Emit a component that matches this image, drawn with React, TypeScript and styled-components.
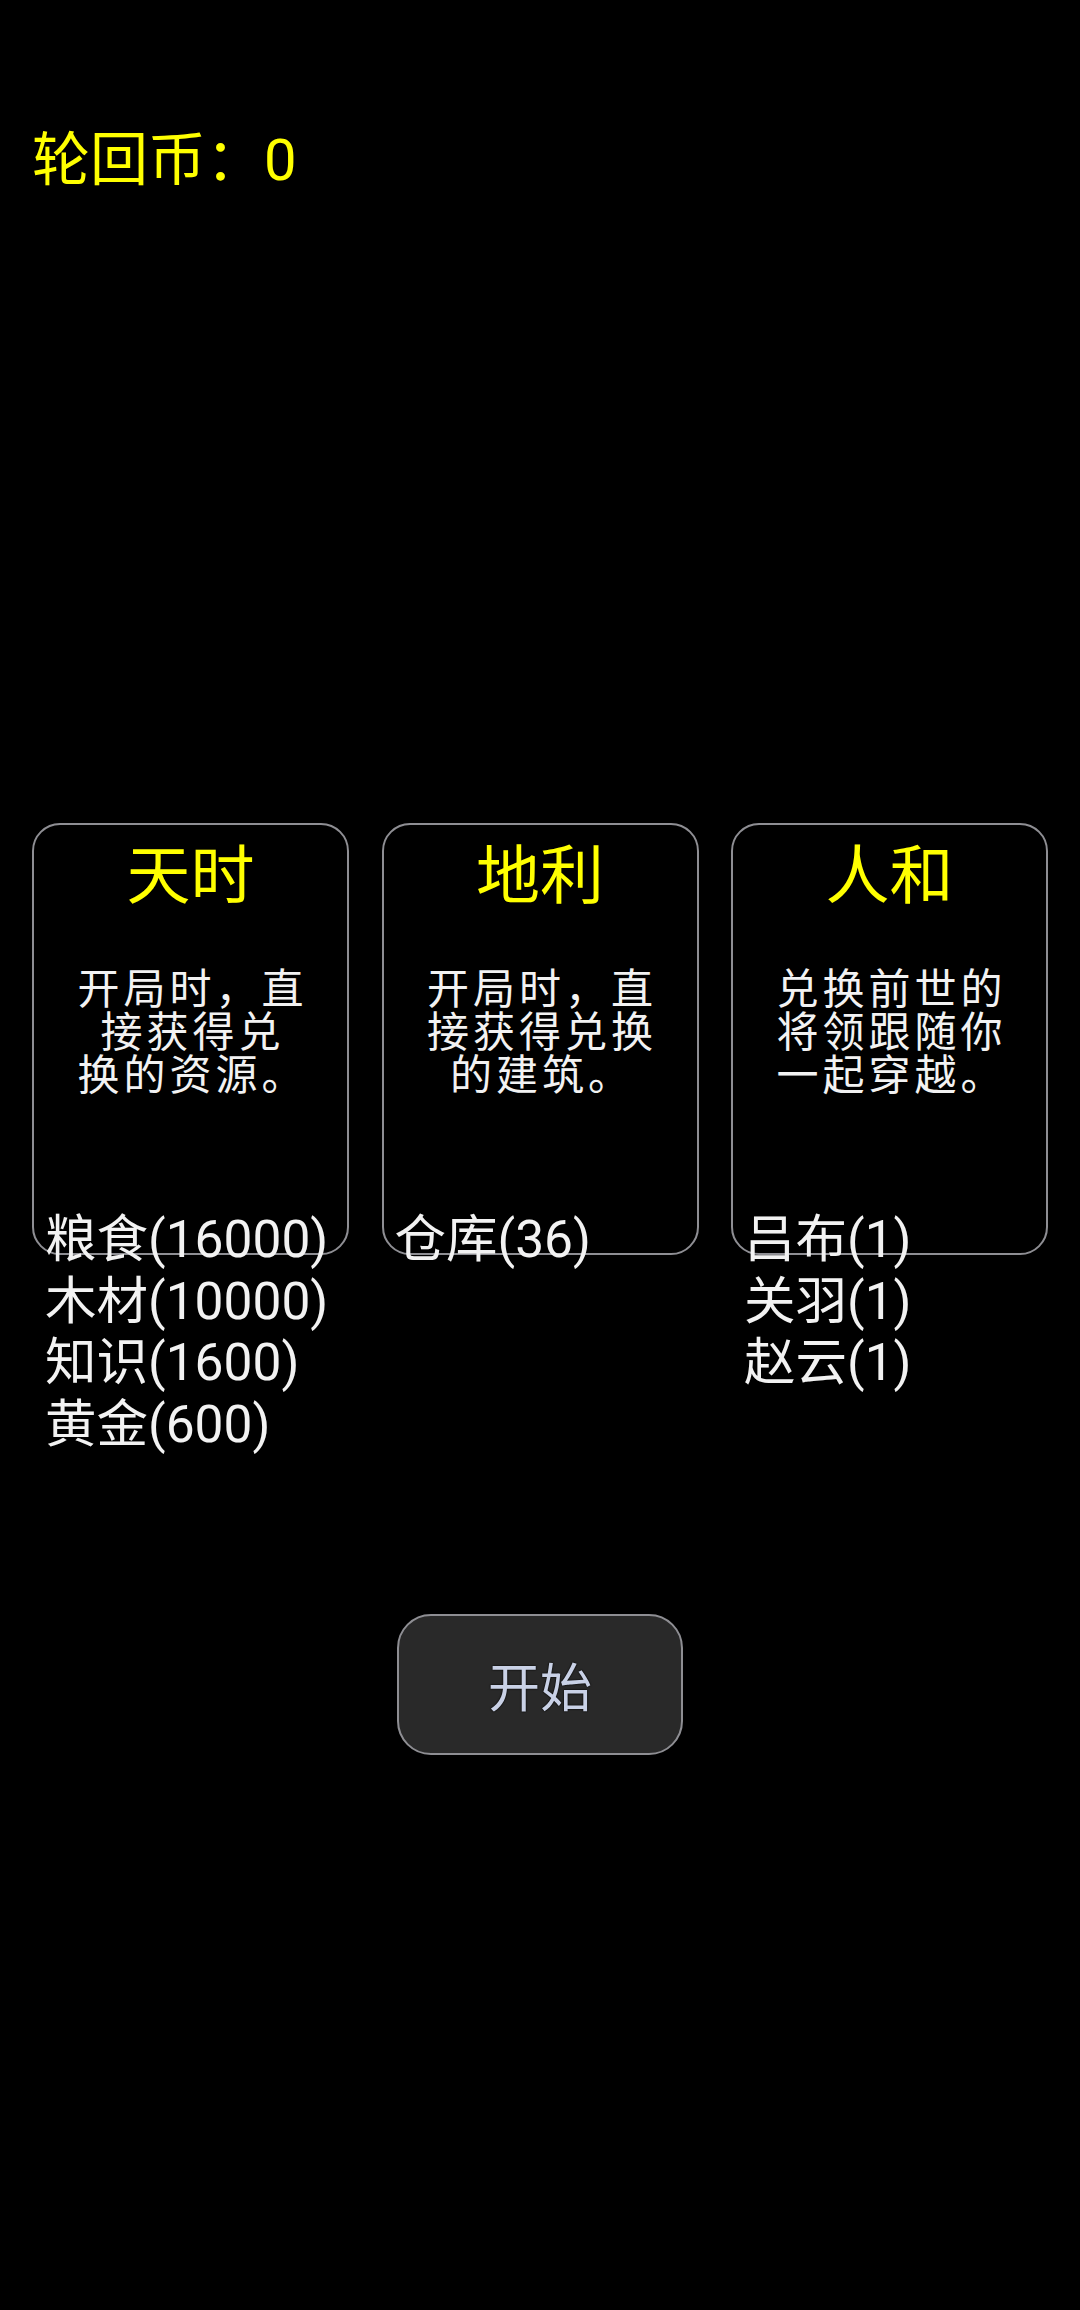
import React from "react";
import styled, { createGlobalStyle } from "styled-components";

const GlobalStyle = createGlobalStyle`
  html, body {
    margin: 0;
    padding: 0;
    background: #000000;
  }
  body {
    font-family: Roboto, "Noto Sans CJK SC", "Noto Sans", sans-serif;
    color: #ffffff;
  }
`;

const Screen = styled.div`
  width: 1080px;
  min-height: 2310px;
  background: #000000;
  box-sizing: border-box;
  padding: 125px 32px 0 32px;
  display: flex;
  flex-direction: column;
`;

const Coins = styled.div`
  font-size: 58px;
  line-height: 70px;
  color: #ffff00;
  height: 70px;
`;

const CardRow = styled.div`
  margin-top: 628px;
  display: flex;
  justify-content: space-between;
  align-items: flex-start;
`;

const Column = styled.div`
  width: 317px;
  display: flex;
  flex-direction: column;
`;

const Card = styled.div`
  box-sizing: border-box;
  width: 317px;
  height: 432px;
  border: 2px solid #8e8e93;
  border-radius: 28px;
  padding-top: 14px;
  display: flex;
  flex-direction: column;
  align-items: center;
`;

const CardTitle = styled.div`
  font-size: 64px;
  line-height: 76px;
  color: #ffff00;
`;

const Desc = styled.div`
  margin-top: 53px;
  display: flex;
  flex-direction: column;
  align-items: center;
  font-size: 42px;
  line-height: 43px;
  letter-spacing: 4px;
  color: #f2f2f2;
`;

const DescLine = styled.span`
  display: block;
  white-space: nowrap;
  margin-right: -4px;
`;

const ItemList = styled.div`
  margin-top: -46px;
  padding-left: 13px;
  display: flex;
  flex-direction: column;
`;

const Item = styled.div`
  font-size: 51.5px;
  line-height: 61.5px;
  color: #f2f2f2;
  white-space: nowrap;
`;

const StartButton = styled.button`
  align-self: center;
  margin-top: 159px;
  width: 286px;
  height: 141px;
  box-sizing: border-box;
  background: #292929;
  border: 2px solid #8e8e93;
  border-radius: 34px;
  font-family: Roboto, "Noto Sans CJK SC", sans-serif;
  font-size: 52px;
  color: #c9d1e6;
  text-shadow: 0 0 2px #000000, 0 0 1px #000000;
  padding: 0;
  cursor: pointer;
`;

type CardData = {
  title: string;
  lines: string[];
  items: string[];
};

const cards: CardData[] = [
  {
    title: "天时",
    lines: ["开局时，直", "接获得兑", "换的资源。"],
    items: ["粮食(16000)", "木材(10000)", "知识(1600)", "黄金(600)"],
  },
  {
    title: "地利",
    lines: ["开局时，直", "接获得兑换", "的建筑。"],
    items: ["仓库(36)"],
  },
  {
    title: "人和",
    lines: ["兑换前世的", "将领跟随你", "一起穿越。"],
    items: ["吕布(1)", "关羽(1)", "赵云(1)"],
  },
];

export default function App() {
  return (
    <>
      <GlobalStyle />
      <Screen>
        <Coins>轮回币：0</Coins>
        <CardRow>
          {cards.map((c) => (
            <Column key={c.title}>
              <Card>
                <CardTitle>{c.title}</CardTitle>
                <Desc>
                  {c.lines.map((l, i) => (
                    <DescLine key={i}>{l}</DescLine>
                  ))}
                </Desc>
              </Card>
              <ItemList>
                {c.items.map((it) => (
                  <Item key={it}>{it}</Item>
                ))}
              </ItemList>
            </Column>
          ))}
        </CardRow>
        <StartButton>开始</StartButton>
      </Screen>
    </>
  );
}
